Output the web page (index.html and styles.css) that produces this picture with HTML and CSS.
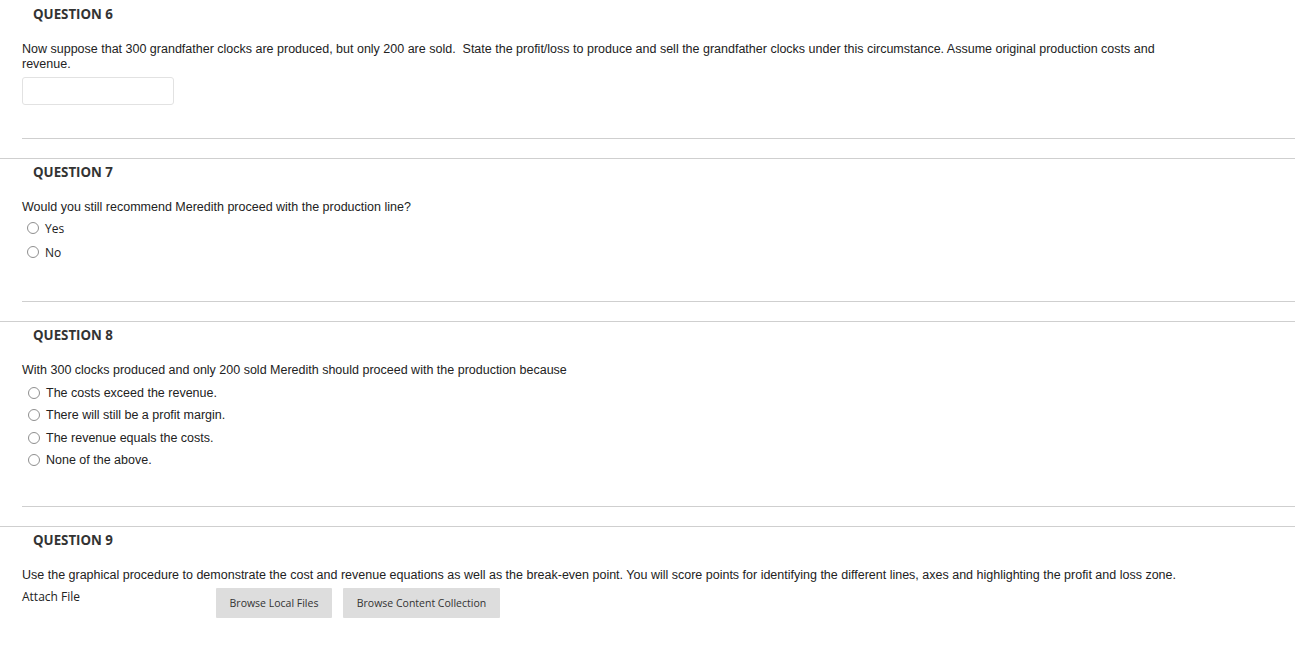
FILE: index.html
```html
<!DOCTYPE html>
<html>
<head>
<meta charset="utf-8">
<link rel="stylesheet" href="styles.css">
</head>
<body>
<div class="page">
  <section class="question first">
    <h3 class="q-title">QUESTION 6</h3>
    <div class="q-body">
      <p class="q-text">Now suppose that 300 grandfather clocks are produced, but only 200 are sold.&nbsp; State the profit/loss to produce and sell the grandfather clocks under this circumstance. Assume original production costs and revenue.</p>
      <input class="answer-input" type="text">
      <div class="q-end q-end-6"></div>
    </div>
  </section>

  <section class="question">
    <h3 class="q-title">QUESTION 7</h3>
    <div class="q-body">
      <p class="q-text">Would you still recommend Meredith proceed with the production line?</p>
      <ul class="options options-os">
        <li class="option"><span class="radio"></span><span>Yes</span></li>
        <li class="option"><span class="radio"></span><span>No</span></li>
      </ul>
      <div class="q-end q-end-7"></div>
    </div>
  </section>

  <section class="question">
    <h3 class="q-title">QUESTION 8</h3>
    <div class="q-body">
      <p class="q-text">With 300 clocks produced and only 200 sold Meredith should proceed with the production because</p>
      <ul class="options options-arial">
        <li class="option"><span class="radio"></span><span>The costs exceed the revenue.</span></li>
        <li class="option"><span class="radio"></span><span>There will still be a profit margin.</span></li>
        <li class="option"><span class="radio"></span><span>The revenue equals the costs.</span></li>
        <li class="option"><span class="radio"></span><span>None of the above.</span></li>
      </ul>
      <div class="q-end q-end-8"></div>
    </div>
  </section>

  <section class="question">
    <h3 class="q-title">QUESTION 9</h3>
    <div class="q-body">
      <p class="q-text">Use the graphical procedure to demonstrate the cost and revenue equations as well as the break-even point. You will score points for identifying the different lines, axes and highlighting the profit and loss zone.</p>
      <div class="attach-row">
        <span class="attach-label">Attach File</span>
        <div class="attach-buttons">
          <button class="btn btn-local" type="button">Browse Local Files</button>
          <button class="btn btn-content" type="button">Browse Content Collection</button>
        </div>
      </div>
    </div>
  </section>
</div>
</body>
</html>
```

FILE: styles.css
```css
html, body {
  margin: 0;
  padding: 0;
  background: #ffffff;
}

body {
  width: 1295px;
  color: #333333;
  font-family: "Liberation Sans", Arial, sans-serif;
  font-size: 12.5px;
}

.page {
  display: flex;
  flex-direction: column;
}

.question {
  border-top: 1px solid #cfcfcf;
  padding-top: 4px;
}

.question.first {
  border-top: none;
  padding-top: 5px;
}

.q-title {
  margin: 0;
  padding-left: 33px;
  font-family: "Open Sans", sans-serif;
  font-weight: 700;
  font-size: 13.3px;
  line-height: 18px;
  color: #333333;
}

.q-body {
  margin-left: 22px;
  padding-top: 19px;
}

.q-text {
  margin: 0;
  width: 1172px;
  font-family: "Liberation Sans", Arial, sans-serif;
  font-size: 12.5px;
  line-height: 15px;
  color: #222222;
}

.answer-input {
  display: block;
  box-sizing: border-box;
  margin: 5px 0 0 0;
  width: 152px;
  height: 28px;
  border: 1px solid #e2e2e2;
  border-radius: 3px;
  background: #ffffff;
  padding: 0 6px;
  outline: none;
}

.q-end {
  border-top: 1px solid #cfcfcf;
  height: 19px;
}

.q-end-6 { margin-top: 33px; }
.q-end-7 { margin-top: 37px; }
.q-end-8 { margin-top: 35px; }

.options {
  list-style: none;
  margin: 0;
  padding: 0;
  display: flex;
  flex-direction: column;
}

.option {
  display: flex;
  align-items: center;
  gap: 6px;
}

.options-os {
  margin-top: 1px;
  padding-left: 5px;
  font-family: "Open Sans", sans-serif;
  font-size: 12px;
  color: #222222;
}

.options-os .option {
  height: 24px;
}

.options-arial {
  margin-top: 4px;
  padding-left: 6px;
  font-family: "Liberation Sans", Arial, sans-serif;
  font-size: 12.5px;
  color: #222222;
}

.options-arial .option {
  height: 22.33px;
}

.radio {
  box-sizing: border-box;
  width: 12px;
  height: 12px;
  border: 1px solid #8f8f8f;
  border-radius: 50%;
  background: #ffffff;
  flex: none;
}

.attach-row {
  display: flex;
  align-items: flex-start;
  margin-top: 5px;
  padding-bottom: 28px;
}

.attach-label {
  width: 194px;
  font-family: "Open Sans", sans-serif;
  font-size: 12px;
  line-height: 17px;
  color: #222222;
}

.attach-buttons {
  display: flex;
  gap: 11px;
}

.btn {
  height: 30px;
  border: none;
  border-radius: 1px;
  background: #dddddd;
  color: #333333;
  font-family: "Open Sans", sans-serif;
  font-size: 10.5px;
  padding: 0;
}

.btn-local { width: 116px; }
.btn-content { width: 157px; }
```
